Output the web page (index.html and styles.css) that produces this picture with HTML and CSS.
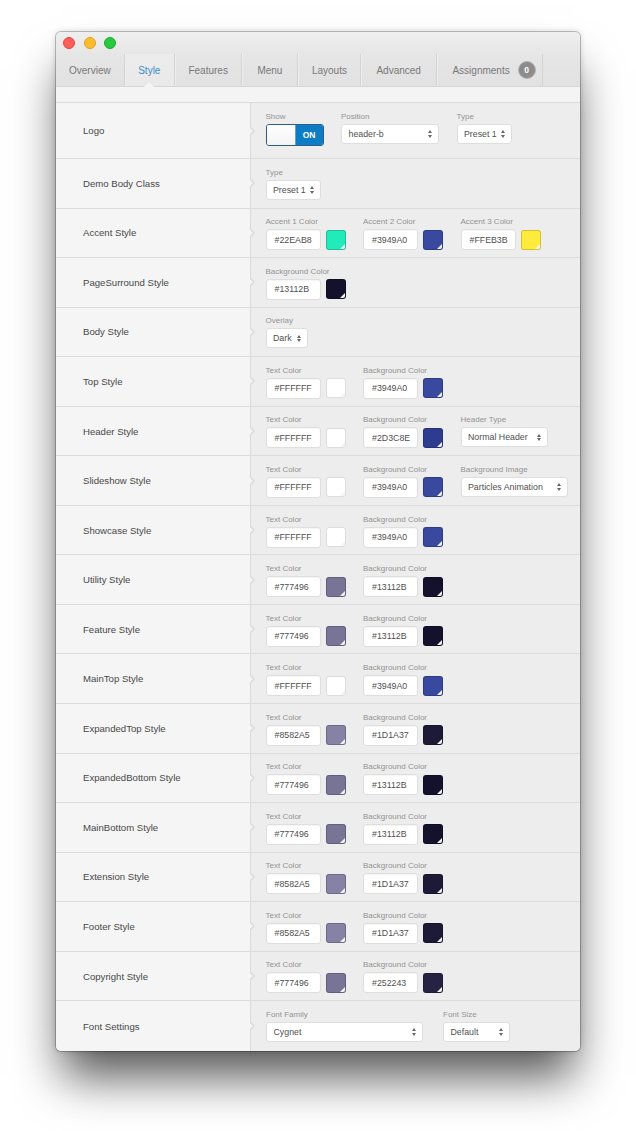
FILE: index.html
```html
<!DOCTYPE html>
<html>
<head>
<meta charset="utf-8">
<title>Style</title>
<link rel="stylesheet" href="styles.css">
</head>
<body>
<div class="page">
<div class="window">
  <div class="titlebar">
    <span class="dot dot-red"></span>
    <span class="dot dot-yellow"></span>
    <span class="dot dot-green"></span>
  </div>
  <div class="tabs">
    <div class="tab">Overview</div>
    <div class="tab active">Style</div>
    <div class="tab">Features</div>
    <div class="tab tab-wide">Menu</div>
    <div class="tab">Layouts</div>
    <div class="tab tab-wide">Advanced</div>
    <div class="tab tab-assign">Assignments <span class="badge">0</span></div>
  </div>
  <div class="strip"></div>

  <div class="row row-tall">
    <div class="row-label">Logo</div>
    <div class="row-body">
      <div class="field"><div class="flabel">Show</div>
        <div class="toggle"><span class="toggle-off"></span><span class="toggle-on">ON</span></div></div>
      <div class="field"><div class="flabel">Position</div><div class="select w98">header-b</div></div>
      <div class="field"><div class="flabel">Type</div><div class="select w55">Preset 1</div></div>
    </div>
  </div>

  <div class="row">
    <div class="row-label">Demo Body Class</div>
    <div class="row-body">
      <div class="field"><div class="flabel">Type</div><div class="select w55">Preset 1</div></div>
    </div>
  </div>

  <div class="row">
    <div class="row-label">Accent Style</div>
    <div class="row-body">
      <div class="field"><div class="flabel">Accent 1 Color</div><div class="color"><div class="input">#22EAB8</div><span class="swatch sw-22eab8"></span></div></div>
      <div class="field"><div class="flabel">Accent 2 Color</div><div class="color"><div class="input">#3949A0</div><span class="swatch sw-3949a0"></span></div></div>
      <div class="field"><div class="flabel">Accent 3 Color</div><div class="color"><div class="input">#FFEB3B</div><span class="swatch sw-ffeb3b"></span></div></div>
    </div>
  </div>

  <div class="row">
    <div class="row-label">PageSurround Style</div>
    <div class="row-body">
      <div class="field"><div class="flabel">Background Color</div><div class="color"><div class="input">#13112B</div><span class="swatch sw-13112b"></span></div></div>
    </div>
  </div>

  <div class="row">
    <div class="row-label">Body Style</div>
    <div class="row-body">
      <div class="field"><div class="flabel">Overlay</div><div class="select w42">Dark</div></div>
    </div>
  </div>

  <div class="row">
    <div class="row-label">Top Style</div>
    <div class="row-body">
      <div class="field"><div class="flabel">Text Color</div><div class="color"><div class="input">#FFFFFF</div><span class="swatch sw-ffffff"></span></div></div>
      <div class="field"><div class="flabel">Background Color</div><div class="color"><div class="input">#3949A0</div><span class="swatch sw-3949a0"></span></div></div>
    </div>
  </div>

  <div class="row">
    <div class="row-label">Header Style</div>
    <div class="row-body">
      <div class="field"><div class="flabel">Text Color</div><div class="color"><div class="input">#FFFFFF</div><span class="swatch sw-ffffff"></span></div></div>
      <div class="field"><div class="flabel">Background Color</div><div class="color"><div class="input">#2D3C8E</div><span class="swatch sw-2d3c8e"></span></div></div>
      <div class="field"><div class="flabel">Header Type</div><div class="select w87">Normal Header</div></div>
    </div>
  </div>

  <div class="row">
    <div class="row-label">Slideshow Style</div>
    <div class="row-body">
      <div class="field"><div class="flabel">Text Color</div><div class="color"><div class="input">#FFFFFF</div><span class="swatch sw-ffffff"></span></div></div>
      <div class="field"><div class="flabel">Background Color</div><div class="color"><div class="input">#3949A0</div><span class="swatch sw-3949a0"></span></div></div>
      <div class="field"><div class="flabel">Background Image</div><div class="select w107">Particles Animation</div></div>
    </div>
  </div>

  <div class="row">
    <div class="row-label">Showcase Style</div>
    <div class="row-body">
      <div class="field"><div class="flabel">Text Color</div><div class="color"><div class="input">#FFFFFF</div><span class="swatch sw-ffffff"></span></div></div>
      <div class="field"><div class="flabel">Background Color</div><div class="color"><div class="input">#3949A0</div><span class="swatch sw-3949a0"></span></div></div>
    </div>
  </div>

  <div class="row">
    <div class="row-label">Utility Style</div>
    <div class="row-body">
      <div class="field"><div class="flabel">Text Color</div><div class="color"><div class="input">#777496</div><span class="swatch sw-777496"></span></div></div>
      <div class="field"><div class="flabel">Background Color</div><div class="color"><div class="input">#13112B</div><span class="swatch sw-13112b"></span></div></div>
    </div>
  </div>

  <div class="row">
    <div class="row-label">Feature Style</div>
    <div class="row-body">
      <div class="field"><div class="flabel">Text Color</div><div class="color"><div class="input">#777496</div><span class="swatch sw-777496"></span></div></div>
      <div class="field"><div class="flabel">Background Color</div><div class="color"><div class="input">#13112B</div><span class="swatch sw-13112b"></span></div></div>
    </div>
  </div>

  <div class="row">
    <div class="row-label">MainTop Style</div>
    <div class="row-body">
      <div class="field"><div class="flabel">Text Color</div><div class="color"><div class="input">#FFFFFF</div><span class="swatch sw-ffffff"></span></div></div>
      <div class="field"><div class="flabel">Background Color</div><div class="color"><div class="input">#3949A0</div><span class="swatch sw-3949a0"></span></div></div>
    </div>
  </div>

  <div class="row">
    <div class="row-label">ExpandedTop Style</div>
    <div class="row-body">
      <div class="field"><div class="flabel">Text Color</div><div class="color"><div class="input">#8582A5</div><span class="swatch sw-8582a5"></span></div></div>
      <div class="field"><div class="flabel">Background Color</div><div class="color"><div class="input">#1D1A37</div><span class="swatch sw-1d1a37"></span></div></div>
    </div>
  </div>

  <div class="row">
    <div class="row-label">ExpandedBottom Style</div>
    <div class="row-body">
      <div class="field"><div class="flabel">Text Color</div><div class="color"><div class="input">#777496</div><span class="swatch sw-777496"></span></div></div>
      <div class="field"><div class="flabel">Background Color</div><div class="color"><div class="input">#13112B</div><span class="swatch sw-13112b"></span></div></div>
    </div>
  </div>

  <div class="row">
    <div class="row-label">MainBottom Style</div>
    <div class="row-body">
      <div class="field"><div class="flabel">Text Color</div><div class="color"><div class="input">#777496</div><span class="swatch sw-777496"></span></div></div>
      <div class="field"><div class="flabel">Background Color</div><div class="color"><div class="input">#13112B</div><span class="swatch sw-13112b"></span></div></div>
    </div>
  </div>

  <div class="row">
    <div class="row-label">Extension Style</div>
    <div class="row-body">
      <div class="field"><div class="flabel">Text Color</div><div class="color"><div class="input">#8582A5</div><span class="swatch sw-8582a5"></span></div></div>
      <div class="field"><div class="flabel">Background Color</div><div class="color"><div class="input">#1D1A37</div><span class="swatch sw-1d1a37"></span></div></div>
    </div>
  </div>

  <div class="row">
    <div class="row-label">Footer Style</div>
    <div class="row-body">
      <div class="field"><div class="flabel">Text Color</div><div class="color"><div class="input">#8582A5</div><span class="swatch sw-8582a5"></span></div></div>
      <div class="field"><div class="flabel">Background Color</div><div class="color"><div class="input">#1D1A37</div><span class="swatch sw-1d1a37"></span></div></div>
    </div>
  </div>

  <div class="row">
    <div class="row-label">Copyright Style</div>
    <div class="row-body">
      <div class="field"><div class="flabel">Text Color</div><div class="color"><div class="input">#777496</div><span class="swatch sw-777496"></span></div></div>
      <div class="field"><div class="flabel">Background Color</div><div class="color"><div class="input">#252243</div><span class="swatch sw-252243"></span></div></div>
    </div>
  </div>

  <div class="row row-last">
    <div class="row-label">Font Settings</div>
    <div class="row-body gap-wide">
      <div class="field"><div class="flabel">Font Family</div><div class="select w157">Cygnet</div></div>
      <div class="field"><div class="flabel">Font Size</div><div class="select w67">Default</div></div>
    </div>
  </div>
</div>
</div>
</body>
</html>
```

FILE: styles.css
```css
html, body {
  margin: 0;
  padding: 0;
  background: #ffffff;
}

body {
  font-family: "Liberation Sans", Arial, Helvetica, sans-serif;
  color: #555;
}

.page {
  padding: 32px 0 81px 56px;
}

.window {
  width: 524px;
  border-radius: 5px;
  overflow: hidden;
  background: #ececec;
  box-shadow: 0 0 0 1px rgba(0, 0, 0, 0.22), 0 32px 44px -6px rgba(0, 0, 0, 0.66), 0 0 6px rgba(0, 0, 0, 0.18);
}

/* title bar */
.titlebar {
  height: 22px;
  display: flex;
  align-items: center;
  gap: 8.3px;
  padding-left: 7.3px;
  background: linear-gradient(#efefef, #e6e6e6);
}

.dot {
  width: 12px;
  height: 12px;
  border-radius: 50%;
  box-sizing: border-box;
}

.dot-red { background: #fc5f57; border: 1px solid #e2463f; }
.dot-yellow { background: #fdbc2e; border: 1px solid #e1a116; }
.dot-green { background: #28c840; border: 1px solid #1aab29; }

/* tabs */
.tabs {
  height: 33px;
  box-sizing: border-box;
  display: flex;
  background: linear-gradient(#e6e6e6, #e1e1e1);
  border-bottom: 1px solid #d7d7d7;
}

.tab {
  display: flex;
  align-items: center;
  padding: 0 13.5px;
  font-size: 10px;
  color: #787878;
  border-right: 1px solid #d3d3d3;
  box-shadow: inset 1px 0 0 #eeeeee;
  position: relative;
}

.tab:first-child {
  box-shadow: none;
  padding: 0 13px;
}

.tab-wide {
  padding: 0 15px;
}

.tab.active {
  color: #3d8ccc;
  background: linear-gradient(#ececec, #e9e9e9);
}

.tab.active::after {
  content: "";
  position: absolute;
  left: 50%;
  bottom: -1px;
  margin-left: -5px;
  width: 0;
  height: 0;
  border-left: 5px solid transparent;
  border-right: 5px solid transparent;
  border-bottom: 5px solid #f4f4f4;
}

.tab-assign {
  padding-left: 15.5px;
  padding-right: 6px;
}

.badge {
  display: inline-flex;
  align-items: center;
  justify-content: center;
  width: 18px;
  height: 18px;
  margin-left: 8px;
  border-radius: 50%;
  box-sizing: border-box;
  background: #8c8c8c;
  border: 1.5px solid #b4b4b4;
  color: #fff;
  font-size: 8.5px;
  font-weight: bold;
}

.strip {
  height: 15px;
  background: #f4f4f4;
  border-bottom: 1px solid #dcdcdc;
}

/* rows */
.row {
  display: grid;
  grid-template-columns: 195px 1fr;
  height: 49.55px;
  box-sizing: border-box;
  border-bottom: 1px solid #dcdcdc;
}

.row-tall {
  height: 56px;
}

.row-last {
  border-bottom: none;
}

.row-label {
  display: flex;
  align-items: center;
  padding-left: 27px;
  background: #f5f5f5;
  border-right: 1px solid #dadada;
  font-size: 9.6px;
  color: #484848;
}

.row-body {
  position: relative;
  display: flex;
  align-items: flex-start;
  gap: 17.5px;
  padding: 8.7px 0 0 14.5px;
  background: #ededed;
}

.row-body.gap-wide {
  gap: 20px;
  padding-left: 15px;
}

.row-body::before,
.row-body::after {
  content: "";
  position: absolute;
  top: 50%;
  width: 0;
  height: 0;
  border-style: solid;
  border-color: transparent;
}

.row-body::before {
  left: 0;
  margin-top: -4px;
  border-width: 4px 0 4px 4px;
  border-left-color: #dadada;
}

.row-body::after {
  left: -1px;
  margin-top: -3px;
  border-width: 3px 0 3px 3.5px;
  border-left-color: #f5f5f5;
}

.field {
  display: flex;
  flex-direction: column;
}

.flabel {
  font-size: 8px;
  line-height: 10px;
  height: 10px;
  margin-bottom: 2px;
  color: #939393;
  white-space: nowrap;
}

/* controls */
.color {
  display: flex;
  align-items: center;
  gap: 5px;
}

.input {
  width: 55px;
  height: 21px;
  box-sizing: border-box;
  display: flex;
  align-items: center;
  padding-left: 8px;
  background: #fff;
  border: 1px solid #dedede;
  border-radius: 3px;
  box-shadow: inset 0 1px 1px rgba(0, 0, 0, 0.04);
  font-size: 8.8px;
  color: #4f4f4f;
}

.swatch {
  position: relative;
  width: 20px;
  height: 20px;
  box-sizing: border-box;
  border-radius: 3px;
  border: 1px solid rgba(0, 0, 0, 0.18);
  overflow: hidden;
}

.swatch::after {
  content: "";
  position: absolute;
  right: 0;
  bottom: 0;
  width: 0;
  height: 0;
  border-style: solid;
  border-width: 0 0 5px 5px;
  border-color: transparent transparent #f4f4f4 transparent;
}

.sw-22eab8 { background: #22eab8; }
.sw-3949a0 { background: #3949a0; }
.sw-ffeb3b { background: #ffeb3b; }
.sw-13112b { background: #13112b; }
.sw-ffffff { background: #ffffff; border-color: #dcdcdc; }
.sw-2d3c8e { background: #2d3c8e; }
.sw-777496 { background: #777496; }
.sw-8582a5 { background: #8582a5; }
.sw-1d1a37 { background: #1d1a37; }
.sw-252243 { background: #252243; }

.select {
  position: relative;
  height: 20px;
  box-sizing: border-box;
  display: flex;
  align-items: center;
  padding-left: 6.5px;
  background: #fff;
  border: 1px solid #dedede;
  border-radius: 3px;
  font-size: 8.8px;
  color: #4f4f4f;
  white-space: nowrap;
}

.select::before,
.select::after {
  content: "";
  position: absolute;
  right: 6px;
  width: 0;
  height: 0;
  border-left: 2.5px solid transparent;
  border-right: 2.5px solid transparent;
}

.select::before {
  top: 5.5px;
  border-bottom: 3px solid #666;
}

.select::after {
  top: 10px;
  border-top: 3px solid #666;
}

.w42 { width: 42px; }
.w55 { width: 55px; }
.w67 { width: 67px; }
.w87 { width: 87px; }
.w98 { width: 98px; }
.w107 { width: 107px; }
.w157 { width: 157px; }

/* toggle */
.toggle {
  display: flex;
  width: 58px;
  height: 22px;
  box-sizing: border-box;
  border: 1px solid #2b5d8a;
  border-radius: 3px;
  overflow: hidden;
}

.toggle-off {
  width: 28px;
  background: linear-gradient(#ffffff, #f3f3f3);
  border-right: 1px solid #7d9bb8;
}

.toggle-on {
  flex: 1;
  display: flex;
  align-items: center;
  justify-content: center;
  background: #0e7cc4;
  color: #fff;
  font-size: 8.5px;
  font-weight: bold;
}
```
